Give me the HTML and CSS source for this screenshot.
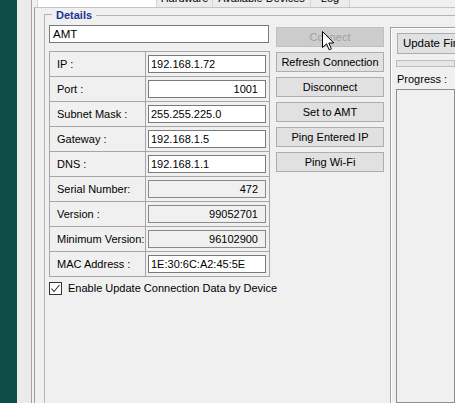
FILE: index.html
```html
<!DOCTYPE html>
<html>
<head>
<meta charset="utf-8">
<link rel="stylesheet" href="styles.css">
</head>
<body>
<div class="screen">
  <div class="desk"></div>
  <div class="gutter"></div>
  <div class="window">
    <div class="tabs">
      <div class="tab active"></div>
      <div class="tab t-hw"><span>Hardware</span></div>
      <div class="tab t-av"><span>Available Devices</span></div>
      <div class="tab t-log"><span>Log</span></div>
    </div>
    <div class="page">
      <div class="group">
        <div class="ghead"><span class="legend">Details</span></div>
        <div class="gbody">
          <div class="leftcol">
            <div class="field name">AMT</div>
            <div class="grid">
              <div class="row"><div class="lbl">IP :</div><div class="val"><div class="field">192.168.1.72</div></div></div>
              <div class="row"><div class="lbl">Port :</div><div class="val"><div class="field num">1001</div></div></div>
              <div class="row"><div class="lbl">Subnet Mask :</div><div class="val"><div class="field">255.255.225.0</div></div></div>
              <div class="row"><div class="lbl">Gateway :</div><div class="val"><div class="field">192.168.1.5</div></div></div>
              <div class="row"><div class="lbl">DNS :</div><div class="val"><div class="field">192.168.1.1</div></div></div>
              <div class="row"><div class="lbl">Serial Number:</div><div class="val"><div class="field ro num">472</div></div></div>
              <div class="row"><div class="lbl">Version :</div><div class="val"><div class="field ro num">99052701</div></div></div>
              <div class="row"><div class="lbl">Minimum Version:</div><div class="val"><div class="field ro num">96102900</div></div></div>
              <div class="row"><div class="lbl">MAC Address :</div><div class="val"><div class="field">1E:30:6C:A2:45:5E</div></div></div>
            </div>
            <div class="check">
              <span class="box"><svg width="11" height="11" viewBox="0 0 11 11"><polyline points="1.5,5.5 4,8.5 9.5,2" fill="none" stroke="#2b2b2b" stroke-width="1.1"/></svg></span>
              <span>Enable Update Connection Data by Device</span>
            </div>
          </div>
          <div class="btncol">
            <div class="btn disabled">Connect</div>
            <div class="btn">Refresh Connection</div>
            <div class="btn">Disconnect</div>
            <div class="btn">Set to AMT</div>
            <div class="btn">Ping Entered IP</div>
            <div class="btn">Ping Wi-Fi</div>
          </div>
          <div class="fwpanel">
            <div class="btn fwbtn">Update Firmware</div>
            <div class="bar"></div>
            <div class="plabel">Progress :</div>
            <div class="pbox"></div>
          </div>
        </div>
      </div>
    </div>
  </div>
</div>
<svg class="cursor" width="13" height="20" viewBox="0 0 13 20"><path d="M0.5,0.5 L0.5,16.5 L4.5,12.8 L7.2,18.8 L9.4,17.8 L6.8,12 L11.8,12 Z" fill="#fff" stroke="#000" stroke-width="1"/></svg>
</body>
</html>
```
FILE: styles.css
```css
* { box-sizing: border-box; }
html, body { margin: 0; padding: 0; }
body {
  width: 455px;
  height: 403px;
  overflow: hidden;
  background: #f0f0f0;
  font-family: "Liberation Sans", Arial, sans-serif;
  font-size: 11px;
  color: #000;
  position: relative;
}
.screen { display: flex; height: 403px; }
.desk { width: 17px; flex: none; background: #0f4d49; }
.gutter { width: 14px; flex: none; background: #ebebeb; }
.window {
  flex: 1;
  min-width: 0;
  border-left: 1px solid #a3a3a3;
  display: flex;
  flex-direction: column;
  background: #f0f0f0;
}
.tabs { height: 7px; flex: none; display: flex; padding-left: 5px; overflow: hidden; }
.tab {
  height: 7px;
  overflow: hidden;
  border-right: 1px solid #d4d4d4;
  background: #ececec;
  text-align: center;
  flex: none;
}
.tab span { display: block; margin-top: -8px; line-height: 12px; white-space: nowrap; }
.tab.active { width: 120px; background: #fff; border-left: 1px solid #d4d4d4; }
.t-hw { width: 56px; }
.t-av { width: 98px; }
.t-log { width: 39px; }
.page {
  flex: 1;
  margin-left: 2px;
  border-left: 1px solid #9c9c9c;
  border-top: 1px solid #c4c4c4;
  display: flex;
  flex-direction: column;
  min-height: 0;
}
.group { flex: 1; margin-left: 9px; display: flex; flex-direction: column; min-height: 0; }
.ghead { height: 14px; display: flex; align-items: center; flex: none; }
.ghead::before {
  content: "";
  width: 7px;
  height: 7px;
  align-self: flex-end;
  border-top: 1px solid #b4b4b4;
  border-left: 1px solid #b4b4b4;
}
.ghead::after { content: ""; flex: 1; height: 1px; background: #b4b4b4; }
.legend {
  padding: 0 4px;
  font-weight: bold;
  color: #1d3594;
  line-height: 13px;
}
.gbody {
  flex: 1;
  border-left: 1px solid #b4b4b4;
  padding: 3px 0 0 4px;
  display: flex;
  min-height: 0;
}
.leftcol { width: 221px; flex: none; display: flex; flex-direction: column; }
.field {
  height: 18px;
  border: 1px solid #7a7a7a;
  background: #fff;
  padding: 0 2px;
  line-height: 16px;
  white-space: nowrap;
  overflow: hidden;
}
.field.num { text-align: right; padding-right: 7px; }
.field.ro { background: #f0f0f0; border-color: #8a8a8a; }
.name { width: 220px; font-size: 11.5px; padding-left: 3px; }
.grid { margin-top: 8px; border: 1px solid #a6a6a6; display: flex; flex-direction: column; }
.row { display: flex; height: 25px; border-bottom: 1px solid #a6a6a6; }
.row:last-child { height: 24px; border-bottom: none; }
.lbl { width: 95px; flex: none; padding-left: 7px; display: flex; align-items: center; }
.val { flex: 1; border-left: 1px solid #a6a6a6; padding: 3px 3px 3px 2px; }
.check { margin-top: 4px; display: flex; align-items: center; height: 14px; white-space: nowrap; }
.box {
  width: 13px; height: 13px;
  flex: none;
  border: 1px solid #333;
  background: #fff;
  margin-right: 6px;
  display: flex;
  align-items: center;
  justify-content: center;
}
.box svg { display: block; }
.btncol { width: 108px; flex: none; margin: 2px 0 0 6px; display: flex; flex-direction: column; gap: 5px; }
.btn {
  height: 20px;
  border: 1px solid #adadad;
  background: #e1e1e1;
  text-align: center;
  line-height: 18px;
  white-space: nowrap;
}
.btn.disabled { background: #cccccc; border-color: #bfbfbf; color: #a0a0a0; }
.fwpanel {
  flex: 1;
  min-width: 0;
  margin: 2px 0 0 6px;
  border-left: 1px solid #a0a0a0;
  border-top: 1px solid #a0a0a0;
  box-shadow: inset 1px 1px 0 #fff;
  padding: 5px 0 0 6px;
  display: flex;
  flex-direction: column;
  overflow: hidden;
}
.fwbtn { width: 100px; height: 21px; line-height: 19px; font-size: 11.5px; flex: none; }
.bar { margin-top: 6px; height: 7px; border: 1px solid #bcbcbc; background: #e6e6e6; flex: none; margin-left: -1px; }
.plabel { margin-top: 5px; line-height: 14px; flex: none; }
.pbox { margin-top: 3px; flex: 1; border: 1px solid #8e8e8e; background: #f0f0f0; margin-left: -1px; }
.cursor { position: absolute; left: 322px; top: 31px; }
```
